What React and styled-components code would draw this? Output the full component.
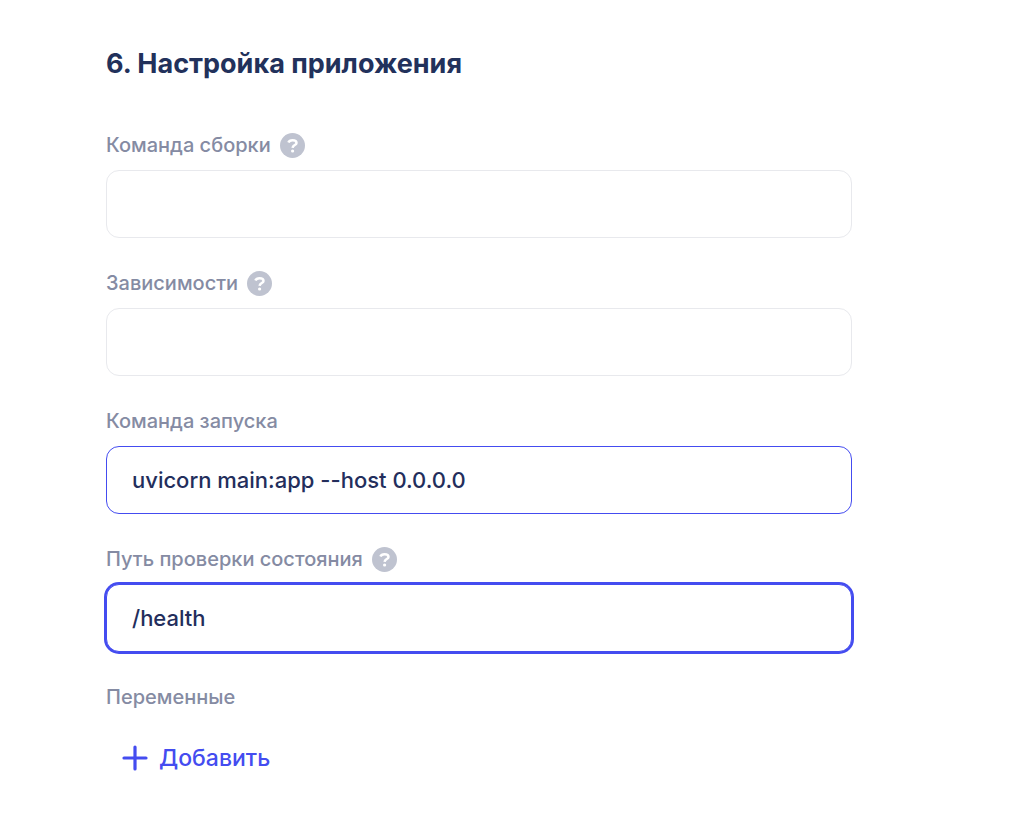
import React, { useState } from 'react';
import styled, { createGlobalStyle, ThemeProvider } from 'styled-components';

const theme = {
  fontFamily: "'Inter', 'Liberation Sans', sans-serif",
  colors: {
    title: '#22315b',
    text: '#232e5c',
    label: '#858ba3',
    hint: '#bfc3d0',
    border: '#e8e9ed',
    primary: '#444cf0',
    white: '#ffffff',
  },
};

const GlobalStyle = createGlobalStyle`
  * {
    box-sizing: border-box;
  }

  body {
    margin: 0;
    background: #ffffff;
  }
`;

const Section = styled.form`
  display: flex;
  flex-direction: column;
  align-items: stretch;
  padding: 44px 158px 36px 106px;
  font-family: ${({ theme: { fontFamily } }) => fontFamily};
`;

const Title = styled.h2`
  margin: 0 0 48px;
  font-size: 27px;
  font-weight: 700;
  line-height: 40px;
  color: ${({ theme: { colors } }) => colors.title};
`;

const Fields = styled.div`
  display: flex;
  flex-direction: column;
  gap: 32px;
`;

const FieldContainer = styled.div`
  display: flex;
  flex-direction: column;
  gap: 12px;
`;

const LabelRow = styled.div`
  display: flex;
  align-items: center;
  gap: 9px;
  height: 26px;
`;

const Label = styled.label`
  font-size: 20px;
  font-weight: 500;
  line-height: 26px;
  color: ${({ theme: { colors } }) => colors.label};
`;

const HintButton = styled.button`
  display: flex;
  width: 25px;
  height: 25px;
  padding: 0;
  border: none;
  border-radius: 50%;
  background: ${({ theme: { colors } }) => colors.hint};
  color: ${({ theme: { colors } }) => colors.white};
  cursor: pointer;
`;

const Input = styled.input`
  width: 100%;
  height: 68px;
  padding: 0 25px;
  border: 1px solid
    ${({ $filled, theme: { colors } }) =>
      $filled ? colors.primary : colors.border};
  border-radius: 13px;
  outline: none;
  background: ${({ theme: { colors } }) => colors.white};
  box-shadow: ${({ $active, theme: { colors } }) =>
    $active ? `0 0 0 2px ${colors.primary}` : 'none'};
  font-family: inherit;
  font-size: 22px;
  font-weight: 500;
  color: ${({ theme: { colors } }) => colors.text};
`;

const Variables = styled.fieldset`
  display: flex;
  flex-direction: column;
  align-items: flex-start;
  gap: 32px;
  min-width: 0;
  margin: 0;
  padding: 0;
  border: none;
`;

const AddButton = styled.button`
  display: flex;
  align-items: center;
  gap: 11px;
  padding: 0 16px;
  border: none;
  background: none;
  font-family: inherit;
  font-size: 23px;
  font-weight: 500;
  line-height: 32px;
  color: ${({ theme: { colors } }) => colors.primary};
  cursor: pointer;
`;

const QuestionIcon = () => (
  <svg width="25" height="25" viewBox="0 0 25 25" fill="none" aria-hidden="true">
    <path
      d="M8.4 9.5C9 8 10.4 7.2 12.5 7.2C14.9 7.2 16.5 8.2 16.5 9.9C16.5 12.1 12.7 12.1 12.6 14.9"
      stroke="currentColor"
      strokeWidth="2.5"
    />
    <circle cx="12.6" cy="18" r="1.6" fill="currentColor" />
  </svg>
);

const PlusIcon = () => (
  <svg width="26" height="26" viewBox="0 0 26 26" fill="none" aria-hidden="true">
    <path
      d="M13 2V24M2 13H24"
      stroke="currentColor"
      strokeWidth="3.2"
      strokeLinecap="round"
    />
  </svg>
);

const Field = ({ id, label, hint, active, value, onChange }) => (
  <FieldContainer>
    <LabelRow>
      <Label htmlFor={id}>{label}</Label>
      {hint && (
        <HintButton type="button" aria-label={label}>
          <QuestionIcon />
        </HintButton>
      )}
    </LabelRow>
    <Input
      id={id}
      type="text"
      spellCheck={false}
      autoComplete="off"
      $filled={value !== ''}
      $active={active}
      value={value}
      onChange={(e) => onChange(id, e.target.value)}
    />
  </FieldContainer>
);

const fields = [
  { id: 'build', label: 'Команда сборки', hint: true },
  { id: 'dependencies', label: 'Зависимости', hint: true },
  { id: 'run', label: 'Команда запуска' },
  { id: 'health', label: 'Путь проверки состояния', hint: true, active: true },
];

const App = () => {
  const [values, setValues] = useState({
    build: '',
    dependencies: '',
    run: 'uvicorn main:app --host 0.0.0.0',
    health: '/health',
  });

  const handleChange = (id, value) =>
    setValues((prev) => ({ ...prev, [id]: value }));

  return (
    <ThemeProvider theme={theme}>
      <GlobalStyle />
      <Section onSubmit={(e) => e.preventDefault()}>
        <Title>6. Настройка приложения</Title>
        <Fields>
          {fields.map((field) => (
            <Field
              key={field.id}
              {...field}
              value={values[field.id]}
              onChange={handleChange}
            />
          ))}
          <Variables aria-labelledby="variables">
            <Label as="span" id="variables">
              Переменные
            </Label>
            <AddButton type="button">
              <PlusIcon />
              Добавить
            </AddButton>
          </Variables>
        </Fields>
      </Section>
    </ThemeProvider>
  );
};

export default App;
